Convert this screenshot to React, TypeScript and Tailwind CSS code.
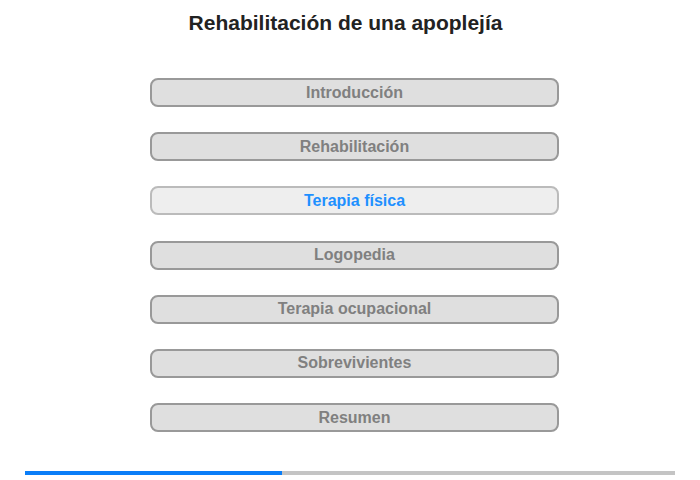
import React from "react";

const items = [
  "Introducción",
  "Rehabilitación",
  "Terapia física",
  "Logopedia",
  "Terapia ocupacional",
  "Sobrevivientes",
  "Resumen",
];

export default function App() {
  return (
    <div
      className="w-[700px] h-[480px] bg-white flex flex-col items-center"
      style={{ fontFamily: '"Liberation Sans", Arial, sans-serif' }}
    >
      <h1 className="mt-[10px] mr-[9px] text-[21px] leading-[25px] font-bold text-[#222222]">
        Rehabilitación de una apoplejía
      </h1>
      <div className="mt-[43px] ml-[9px] flex flex-col gap-[25.2px]">
        {items.map((t, i) => {
          const active = i === 2;
          return (
            <div
              key={t}
              className={
                active
                  ? "w-[409px] h-[29px] rounded-[8px] border-2 border-[#bbbbbb] bg-[#eeeeee] flex items-center justify-center text-[16px] font-bold text-[#1e90ff]"
                  : "w-[409px] h-[29px] rounded-[8px] border-2 border-[#999999] bg-[#dfdfdf] flex items-center justify-center text-[16px] font-bold text-[#808080]"
              }
            >
              {t}
            </div>
          );
        })}
      </div>
      <div className="mt-[39px] w-[650px] h-[4px] flex">
        <div className="w-[257px] h-full bg-[#0a7ef8]" />
        <div className="flex-1 h-full bg-[#c4c4c4]" />
      </div>
    </div>
  );
}
